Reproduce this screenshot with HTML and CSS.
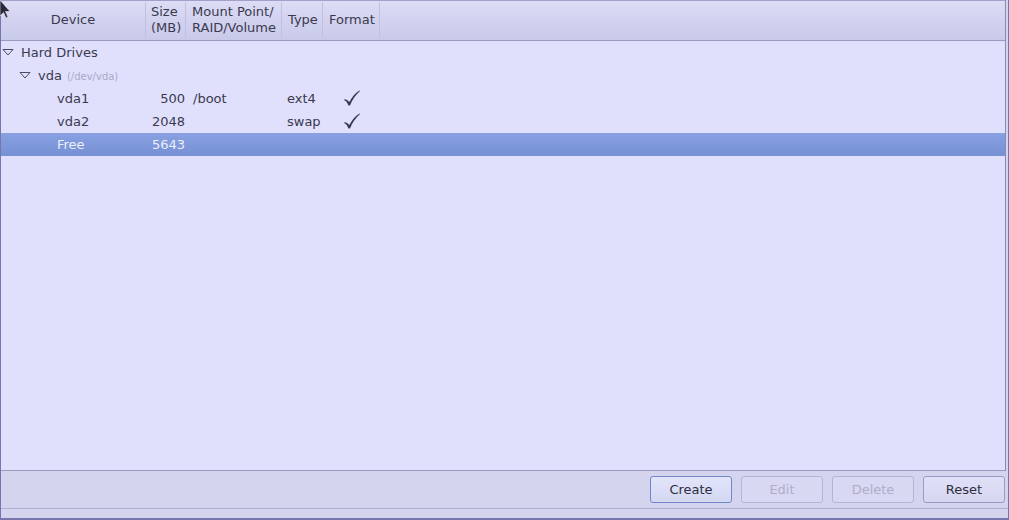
FILE: index.html
```html
<!DOCTYPE html>
<html>
<head>
<meta charset="utf-8">
<link rel="stylesheet" href="styles.css">
</head>
<body>
<div class="window">
  <div class="tree">
    <div class="header">
      <div class="hcell c-device center">Device</div>
      <div class="hcell c-size">Size<br>(MB)</div>
      <div class="hcell c-mount">Mount Point/<br>RAID/Volume</div>
      <div class="hcell c-type">Type</div>
      <div class="hcell c-format">Format</div>
      <div class="hcell c-rest"></div>
    </div>
    <div class="rows">
      <div class="row">
        <div class="cell c-device lvl0"><svg class="exp" width="12" height="8" viewBox="0 0 12 8"><path d="M1 1.5 L11 1.5 L6 7 Z" fill="none" stroke="#4a4a64" stroke-width="1" stroke-linejoin="round"/></svg>Hard Drives</div>
      </div>
      <div class="row">
        <div class="cell c-device lvl1"><svg class="exp" width="12" height="8" viewBox="0 0 12 8"><path d="M1 1.5 L11 1.5 L6 7 Z" fill="none" stroke="#4a4a64" stroke-width="1" stroke-linejoin="round"/></svg>vda <span class="dev">(/dev/vda)</span></div>
      </div>
      <div class="row">
        <div class="cell c-device lvl2">vda1</div>
        <div class="cell c-size num">500</div>
        <div class="cell c-mount">/boot</div>
        <div class="cell c-type">ext4</div>
        <div class="cell c-format"><svg class="check" width="18" height="17" viewBox="0 0 18 17"><path d="M1 10 C2.8 10.6 4.3 12.4 5.5 15.5 L7 15.5 C9 10 12.5 5 17 1 L16.5 0.6 C12 3.5 8.8 7.5 6.3 12 C5 10.3 3.4 9.4 1.5 9.2 Z" fill="#383856"/></svg></div>
      </div>
      <div class="row">
        <div class="cell c-device lvl2">vda2</div>
        <div class="cell c-size num">2048</div>
        <div class="cell c-mount"></div>
        <div class="cell c-type">swap</div>
        <div class="cell c-format"><svg class="check" width="18" height="17" viewBox="0 0 18 17"><path d="M1 10 C2.8 10.6 4.3 12.4 5.5 15.5 L7 15.5 C9 10 12.5 5 17 1 L16.5 0.6 C12 3.5 8.8 7.5 6.3 12 C5 10.3 3.4 9.4 1.5 9.2 Z" fill="#383856"/></svg></div>
      </div>
      <div class="row selected">
        <div class="cell c-device lvl2">Free</div>
        <div class="cell c-size num">5643</div>
      </div>
    </div>
  </div>
  <div class="toolbar">
    <button class="btn focus">Create</button>
    <button class="btn" disabled>Edit</button>
    <button class="btn" disabled>Delete</button>
    <button class="btn">Reset</button>
  </div>
  <div class="statusline"></div>
</div>
<svg class="cursor" width="12" height="20" viewBox="0 0 12 20"><path d="M0 0 L0 16 L3.5 12.5 L6 18 L8 17 L5.5 11.5 L10 11.5 Z" fill="#2a2a3a" stroke="#e8e8f8" stroke-width="0.6"/></svg>
</body>
</html>
```
FILE: styles.css
```css
html, body {
  margin: 0;
  padding: 0;
  background: #d6d6ef;
}
body {
  font-family: "DejaVu Sans", sans-serif;
  font-size: 13px;
  color: #3a3a4e;
  position: relative;
  width: 1009px;
  height: 520px;
  overflow: hidden;
}
.window {
  box-sizing: border-box;
  width: 1009px;
  height: 520px;
  border-left: 1px solid #7676ac;
  border-right: 1px solid #7676ac;
  border-bottom: 2px solid #7676ac;
  display: flex;
  flex-direction: column;
  background: #d4d4ee;
}
.tree {
  height: 471px;
  box-sizing: border-box;
  background: #e0e0fc;
  border-right: 1px solid #8a8ab8;
  border-bottom: 1px solid #9a9ac0;
  margin-right: 2px;
  display: flex;
  flex-direction: column;
}
.header {
  height: 41px;
  box-sizing: border-box;
  display: grid;
  grid-template-columns: 145px 40px 96px 41px 57px 1fr;
  background: linear-gradient(#dcdcf6, #c9c9ea);
  border-top: 1px solid #a0a0c8;
  border-bottom: 1px solid #9a9ac0;
}
.hcell {
  display: flex;
  align-items: center;
  line-height: 16px;
  border-right: 1px solid #c0c0e0;
  margin: 1px 0 3px;
  padding-left: 5px;
  white-space: nowrap;
}
.hcell.center {
  justify-content: center;
  padding-left: 0;
}
.hcell.c-mount { padding-left: 6px; }
.hcell.c-type { padding-left: 6px; }
.hcell.c-format { padding-left: 6px; }
.hcell.c-rest { border-right: none; }
.row {
  height: 23px;
  display: grid;
  grid-template-columns: 145px 40px 96px 41px 57px 1fr;
  align-items: center;
  white-space: nowrap;
}
.row.selected {
  background: linear-gradient(#87a1e2, #7690d4);
  color: #eceefa;
}
.cell {
  display: flex;
  align-items: center;
  height: 23px;
}
.lvl0 { padding-left: 1px; }
.lvl1 { padding-left: 18px; }
.lvl2 { padding-left: 56px; }
.exp {
  display: block;
  margin-right: 7px;
  margin-top: -1px;
}
.dev {
  font-size: 10px;
  color: #a8a8c8;
  margin-left: 5px;
  padding-top: 2px;
}
.num {
  justify-content: flex-end;
  padding-right: 1px;
}
.c-mount.cell { padding-left: 7px; }
.c-type.cell { padding-left: 5px; }
.c-format.cell { padding-left: 20px; }
.check { display: block; margin-top: -1px; }
.toolbar {
  height: 38px;
  display: flex;
  justify-content: flex-end;
  align-items: flex-start;
  gap: 9px;
  padding: 5px 3px 0 0;
  box-sizing: border-box;
  border-bottom: 1px solid #b0b0d4;
}
.btn {
  width: 82px;
  height: 27px;
  font-family: "DejaVu Sans", sans-serif;
  font-size: 13px;
  color: #2e2e40;
  background: linear-gradient(#e0e0f8, #d6d6f0);
  border: 1px solid #9c9cc0;
  border-radius: 3px;
  padding: 0;
}
.btn.focus {
  border-color: #7088c8;
  background: linear-gradient(#e2e4fa, #d4d8f2);
}
.btn:disabled {
  color: #aeaec8;
  border-color: #b4b4d4;
  background: #d8d8f2;
}
.statusline {
  flex: 1;
}
.cursor {
  position: absolute;
  left: 0;
  top: 0;
}
```
